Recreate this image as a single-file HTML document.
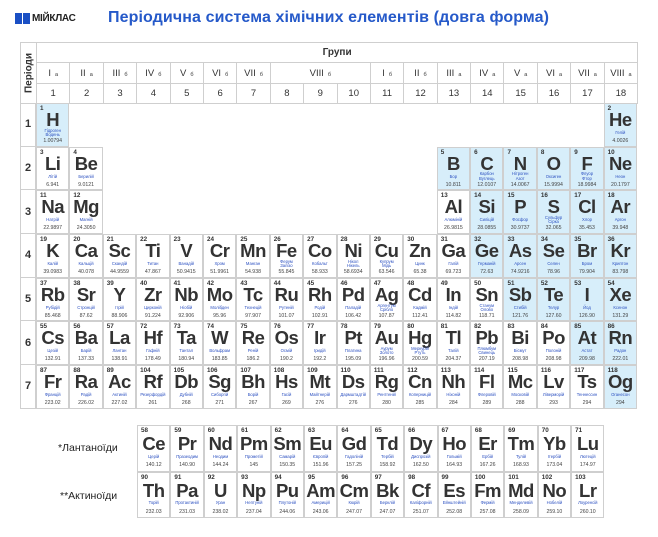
<!DOCTYPE html>
<html><head><meta charset="utf-8"><style>
*{margin:0;padding:0;box-sizing:border-box}
body{width:658px;height:537px;background:#fff;position:relative;overflow:hidden;font-family:"Liberation Sans","DejaVu Sans",sans-serif;color:#333}
.logo{position:absolute;left:15px;top:12px;height:13px;display:flex;align-items:center;gap:2px}
.logo span{font:bold 10px "Liberation Sans",sans-serif;color:#222;letter-spacing:-0.3px}
.title{position:absolute;left:108px;top:9px;font:bold 16px "Liberation Sans",sans-serif;color:#2559c9;white-space:nowrap;letter-spacing:0.1px}
table.h{position:absolute;left:20px;top:42px;border-collapse:collapse;width:617px;table-layout:fixed}
table.h td{border:1.5px solid #cfcfcf;text-align:center;font-size:9.5px;color:#333;padding:0}
table.h sub{font-size:5.5px;vertical-align:baseline;margin-left:4px}
.per{position:absolute;left:20px;top:103px;width:16px}
.per div{height:43.7px;border:1.5px solid #cfcfcf;border-top:none;display:flex;align-items:center;justify-content:center;font:bold 11px "Liberation Sans",sans-serif}
.g{position:absolute;display:grid}
.g1{left:36px;top:103px;grid-template-columns:repeat(18,33.4px);grid-template-rows:repeat(7,43.7px)}
.g2{left:137px;top:425px;grid-template-columns:repeat(14,33.4px);grid-template-rows:repeat(2,46.5px)}
.g>div{border:1px solid #cfcfcf;position:relative;background:#fff}
.g>div.b{background:#d7eefa}
.g i{position:absolute;left:3px;top:1px;font:bold 6.3px "Liberation Sans",sans-serif;font-style:normal;color:#333}
.g b{position:absolute;left:0;right:0;top:6px;text-align:center;font:bold 18.5px/19px "Liberation Sans",sans-serif;color:#333;letter-spacing:-0.5px}
.g u{position:absolute;left:0;right:0;top:25px;height:8px;display:flex;flex-direction:column;align-items:center;justify-content:center;font:4.2px/4.2px "Liberation Sans",sans-serif;color:#2a4fc0;text-decoration:none;white-space:nowrap;overflow:visible}
.g s{position:absolute;left:0;right:0;top:34px;text-align:center;font:5.2px/6px "Liberation Sans",sans-serif;color:#444;text-decoration:none}
.g2 b{top:8px}.g2 u{top:27px}.g2 s{top:36px}
.lab{position:absolute;font:10.5px "Liberation Sans",sans-serif;color:#222}
</style></head><body>
<div class="logo"><svg width="15" height="11" viewBox="0 0 15 11"><rect x="0" y="0" width="7" height="11" fill="#1a4fc4"/><rect x="8" y="0" width="7" height="11" fill="#1a4fc4"/></svg><span>МІЙКЛАС</span></div>
<div class="title">Періодична система хімічних елементів (довга форма)</div>
<table class="h">
<colgroup><col style="width:16px"><col span="18" style="width:33.4px"></colgroup>
<tr style="height:20px"><td rowspan="3" style="position:relative"><div style="position:absolute;left:50%;top:50%;transform:translate(-50%,-50%) rotate(-90deg);font:bold 10px 'Liberation Sans',sans-serif;white-space:nowrap">Періоди</div></td><td colspan="18" style="font-weight:bold;font-size:10px">Групи</td></tr>
<tr style="height:21px"><td>I<sub>а</sub></td><td>II<sub>а</sub></td><td>III<sub>б</sub></td><td>IV<sub>б</sub></td><td>V<sub>б</sub></td><td>VI<sub>б</sub></td><td>VII<sub>б</sub></td><td colspan="3">VIII<sub>б</sub></td><td>I<sub>б</sub></td><td>II<sub>б</sub></td><td>III<sub>а</sub></td><td>IV<sub>а</sub></td><td>V<sub>а</sub></td><td>VI<sub>а</sub></td><td>VII<sub>а</sub></td><td>VIII<sub>а</sub></td></tr>
<tr style="height:20px"><td>1</td><td>2</td><td>3</td><td>4</td><td>5</td><td>6</td><td>7</td><td>8</td><td>9</td><td>10</td><td>11</td><td>12</td><td>13</td><td>14</td><td>15</td><td>16</td><td>17</td><td>18</td></tr>
</table>
<div class="per"><div>1</div><div>2</div><div>3</div><div>4</div><div>5</div><div>6</div><div>7</div></div>
<div class="g g1">
<div class="b" style="grid-area:1/1"><i>1</i><b>H</b><u><span>Гідроген</span><span>Водень</span></u><s>1.00794</s></div>
<div class="b" style="grid-area:1/18"><i>2</i><b>He</b><u>Гелій</u><s>4.0026</s></div>
<div style="grid-area:2/1"><i>3</i><b>Li</b><u>Літій</u><s>6.941</s></div>
<div style="grid-area:2/2"><i>4</i><b>Be</b><u>Берилій</u><s>9.0121</s></div>
<div class="b" style="grid-area:2/13"><i>5</i><b>B</b><u>Бор</u><s>10.811</s></div>
<div class="b" style="grid-area:2/14"><i>6</i><b>C</b><u><span>Карбон</span><span>Вуглець</span></u><s>12.0107</s></div>
<div class="b" style="grid-area:2/15"><i>7</i><b>N</b><u><span>Нітроген</span><span>Азот</span></u><s>14.0067</s></div>
<div class="b" style="grid-area:2/16"><i>8</i><b>O</b><u>Оксиген</u><s>15.9994</s></div>
<div class="b" style="grid-area:2/17"><i>9</i><b>F</b><u><span>Флуор</span><span>Фтор</span></u><s>18.9984</s></div>
<div class="b" style="grid-area:2/18"><i>10</i><b>Ne</b><u>Неон</u><s>20.1797</s></div>
<div style="grid-area:3/1"><i>11</i><b>Na</b><u>Натрій</u><s>22.9897</s></div>
<div style="grid-area:3/2"><i>12</i><b>Mg</b><u>Магній</u><s>24.3050</s></div>
<div style="grid-area:3/13"><i>13</i><b>Al</b><u>Алюміній</u><s>26.9815</s></div>
<div class="b" style="grid-area:3/14"><i>14</i><b>Si</b><u>Силіцій</u><s>28.0855</s></div>
<div class="b" style="grid-area:3/15"><i>15</i><b>P</b><u>Фосфор</u><s>30.9737</s></div>
<div class="b" style="grid-area:3/16"><i>16</i><b>S</b><u><span>Сульфур</span><span>Сірка</span></u><s>32.065</s></div>
<div class="b" style="grid-area:3/17"><i>17</i><b>Cl</b><u>Хлор</u><s>35.453</s></div>
<div class="b" style="grid-area:3/18"><i>18</i><b>Ar</b><u>Аргон</u><s>39.948</s></div>
<div style="grid-area:4/1"><i>19</i><b>K</b><u>Калій</u><s>39.0983</s></div>
<div style="grid-area:4/2"><i>20</i><b>Ca</b><u>Кальцій</u><s>40.078</s></div>
<div style="grid-area:4/3"><i>21</i><b>Sc</b><u>Скандій</u><s>44.9559</s></div>
<div style="grid-area:4/4"><i>22</i><b>Ti</b><u>Титан</u><s>47.867</s></div>
<div style="grid-area:4/5"><i>23</i><b>V</b><u>Ванадій</u><s>50.9415</s></div>
<div style="grid-area:4/6"><i>24</i><b>Cr</b><u>Хром</u><s>51.9961</s></div>
<div style="grid-area:4/7"><i>25</i><b>Mn</b><u>Манган</u><s>54.938</s></div>
<div style="grid-area:4/8"><i>26</i><b>Fe</b><u><span>Ферум</span><span>Залізо</span></u><s>55.845</s></div>
<div style="grid-area:4/9"><i>27</i><b>Co</b><u>Кобальт</u><s>58.933</s></div>
<div style="grid-area:4/10"><i>28</i><b>Ni</b><u><span>Нікол</span><span>Нікель</span></u><s>58.6934</s></div>
<div style="grid-area:4/11"><i>29</i><b>Cu</b><u><span>Купрум</span><span>Мідь</span></u><s>63.546</s></div>
<div style="grid-area:4/12"><i>30</i><b>Zn</b><u>Цинк</u><s>65.38</s></div>
<div style="grid-area:4/13"><i>31</i><b>Ga</b><u>Галій</u><s>69.723</s></div>
<div class="b" style="grid-area:4/14"><i>32</i><b>Ge</b><u>Германій</u><s>72.63</s></div>
<div class="b" style="grid-area:4/15"><i>33</i><b>As</b><u>Арсен</u><s>74.9216</s></div>
<div class="b" style="grid-area:4/16"><i>34</i><b>Se</b><u>Селен</u><s>78.96</s></div>
<div class="b" style="grid-area:4/17"><i>35</i><b>Br</b><u>Бром</u><s>79.904</s></div>
<div class="b" style="grid-area:4/18"><i>36</i><b>Kr</b><u>Криптон</u><s>83.798</s></div>
<div style="grid-area:5/1"><i>37</i><b>Rb</b><u>Рубідій</u><s>85.468</s></div>
<div style="grid-area:5/2"><i>38</i><b>Sr</b><u>Стронцій</u><s>87.62</s></div>
<div style="grid-area:5/3"><i>39</i><b>Y</b><u>Ітрій</u><s>88.906</s></div>
<div style="grid-area:5/4"><i>40</i><b>Zr</b><u>Цирконій</u><s>91.224</s></div>
<div style="grid-area:5/5"><i>41</i><b>Nb</b><u>Ніобій</u><s>92.906</s></div>
<div style="grid-area:5/6"><i>42</i><b>Mo</b><u>Молібден</u><s>95.96</s></div>
<div style="grid-area:5/7"><i>43</i><b>Tc</b><u>Технецій</u><s>97.907</s></div>
<div style="grid-area:5/8"><i>44</i><b>Ru</b><u>Рутеній</u><s>101.07</s></div>
<div style="grid-area:5/9"><i>45</i><b>Rh</b><u>Родій</u><s>102.91</s></div>
<div style="grid-area:5/10"><i>46</i><b>Pd</b><u>Паладій</u><s>106.42</s></div>
<div style="grid-area:5/11"><i>47</i><b>Ag</b><u><span>Аргентум</span><span>Срібло</span></u><s>107.87</s></div>
<div style="grid-area:5/12"><i>48</i><b>Cd</b><u>Кадмій</u><s>112.41</s></div>
<div style="grid-area:5/13"><i>49</i><b>In</b><u>Індій</u><s>114.82</s></div>
<div style="grid-area:5/14"><i>50</i><b>Sn</b><u><span>Станум</span><span>Олово</span></u><s>118.71</s></div>
<div class="b" style="grid-area:5/15"><i>51</i><b>Sb</b><u>Стибій</u><s>121.76</s></div>
<div class="b" style="grid-area:5/16"><i>52</i><b>Te</b><u>Телур</u><s>127.60</s></div>
<div class="b" style="grid-area:5/17"><i>53</i><b>I</b><u>Йод</u><s>126.90</s></div>
<div class="b" style="grid-area:5/18"><i>54</i><b>Xe</b><u>Ксенон</u><s>131.29</s></div>
<div style="grid-area:6/1"><i>55</i><b>Cs</b><u>Цезій</u><s>132.91</s></div>
<div style="grid-area:6/2"><i>56</i><b>Ba</b><u>Барій</u><s>137.33</s></div>
<div style="grid-area:6/3"><i>57</i><b>La</b><u>Лантан</u><s>138.91</s></div>
<div style="grid-area:6/4"><i>72</i><b>Hf</b><u>Гафній</u><s>178.49</s></div>
<div style="grid-area:6/5"><i>73</i><b>Ta</b><u>Тантал</u><s>180.94</s></div>
<div style="grid-area:6/6"><i>74</i><b>W</b><u>Вольфрам</u><s>183.85</s></div>
<div style="grid-area:6/7"><i>75</i><b>Re</b><u>Реній</u><s>186.2</s></div>
<div style="grid-area:6/8"><i>76</i><b>Os</b><u>Осмій</u><s>190.2</s></div>
<div style="grid-area:6/9"><i>77</i><b>Ir</b><u>Іридій</u><s>192.2</s></div>
<div style="grid-area:6/10"><i>78</i><b>Pt</b><u>Платина</u><s>195.09</s></div>
<div style="grid-area:6/11"><i>79</i><b>Au</b><u><span>Аурум</span><span>Золото</span></u><s>196.96</s></div>
<div style="grid-area:6/12"><i>80</i><b>Hg</b><u><span>Меркурій</span><span>Ртуть</span></u><s>200.59</s></div>
<div style="grid-area:6/13"><i>81</i><b>Tl</b><u>Талій</u><s>204.37</s></div>
<div style="grid-area:6/14"><i>82</i><b>Pb</b><u><span>Плюмбум</span><span>Свинець</span></u><s>207.19</s></div>
<div style="grid-area:6/15"><i>83</i><b>Bi</b><u>Бісмут</u><s>208.98</s></div>
<div style="grid-area:6/16"><i>84</i><b>Po</b><u>Полоній</u><s>208.98</s></div>
<div class="b" style="grid-area:6/17"><i>85</i><b>At</b><u>Астат</u><s>209.98</s></div>
<div class="b" style="grid-area:6/18"><i>86</i><b>Rn</b><u>Радон</u><s>222.01</s></div>
<div style="grid-area:7/1"><i>87</i><b>Fr</b><u>Францій</u><s>223.02</s></div>
<div style="grid-area:7/2"><i>88</i><b>Ra</b><u>Радій</u><s>226.02</s></div>
<div style="grid-area:7/3"><i>89</i><b>Ac</b><u>Актиній</u><s>227.02</s></div>
<div style="grid-area:7/4"><i>104</i><b>Rf</b><u>Резерфордій</u><s>261</s></div>
<div style="grid-area:7/5"><i>105</i><b>Db</b><u>Дубній</u><s>268</s></div>
<div style="grid-area:7/6"><i>106</i><b>Sg</b><u>Сиборгій</u><s>271</s></div>
<div style="grid-area:7/7"><i>107</i><b>Bh</b><u>Борій</u><s>267</s></div>
<div style="grid-area:7/8"><i>108</i><b>Hs</b><u>Гасій</u><s>269</s></div>
<div style="grid-area:7/9"><i>109</i><b>Mt</b><u>Майтнерій</u><s>276</s></div>
<div style="grid-area:7/10"><i>110</i><b>Ds</b><u>Дармштадтій</u><s>276</s></div>
<div style="grid-area:7/11"><i>111</i><b>Rg</b><u>Рентгеній</u><s>280</s></div>
<div style="grid-area:7/12"><i>112</i><b>Cn</b><u>Коперницій</u><s>285</s></div>
<div style="grid-area:7/13"><i>113</i><b>Nh</b><u>Ніхоній</u><s>284</s></div>
<div style="grid-area:7/14"><i>114</i><b>Fl</b><u>Флеровій</u><s>289</s></div>
<div style="grid-area:7/15"><i>115</i><b>Mc</b><u>Московій</u><s>288</s></div>
<div style="grid-area:7/16"><i>116</i><b>Lv</b><u>Ліверморій</u><s>293</s></div>
<div style="grid-area:7/17"><i>117</i><b>Ts</b><u>Теннессин</u><s>294</s></div>
<div class="b" style="grid-area:7/18"><i>118</i><b>Og</b><u>Оганесон</u><s>294</s></div>
</div>
<div class="lab" style="left:58px;top:442px">*Лантаноїди</div>
<div class="lab" style="left:60px;top:490px">**Актиноїди</div>
<div class="g g2">
<div><i>58</i><b>Ce</b><u>Церій</u><s>140.12</s></div>
<div><i>59</i><b>Pr</b><u>Празеодим</u><s>140.90</s></div>
<div><i>60</i><b>Nd</b><u>Неодим</u><s>144.24</s></div>
<div><i>61</i><b>Pm</b><u>Прометій</u><s>145</s></div>
<div><i>62</i><b>Sm</b><u>Самарій</u><s>150.35</s></div>
<div><i>63</i><b>Eu</b><u>Європій</u><s>151.96</s></div>
<div><i>64</i><b>Gd</b><u>Гадоліній</u><s>157.25</s></div>
<div><i>65</i><b>Td</b><u>Тербій</u><s>158.92</s></div>
<div><i>66</i><b>Dy</b><u>Диспрозій</u><s>162.50</s></div>
<div><i>67</i><b>Ho</b><u>Гольмій</u><s>164.93</s></div>
<div><i>68</i><b>Er</b><u>Ербій</u><s>167.26</s></div>
<div><i>69</i><b>Tm</b><u>Тулій</u><s>168.93</s></div>
<div><i>70</i><b>Yb</b><u>Ітербій</u><s>173.04</s></div>
<div><i>71</i><b>Lu</b><u>Лютецій</u><s>174.97</s></div>
<div><i>90</i><b>Th</b><u>Торій</u><s>232.03</s></div>
<div><i>91</i><b>Pa</b><u>Протактиній</u><s>231.03</s></div>
<div><i>92</i><b>U</b><u>Уран</u><s>238.02</s></div>
<div><i>93</i><b>Np</b><u>Нептуній</u><s>237.04</s></div>
<div><i>94</i><b>Pu</b><u>Плутоній</u><s>244.06</s></div>
<div><i>95</i><b>Am</b><u>Америцій</u><s>243.06</s></div>
<div><i>96</i><b>Cm</b><u>Кюрій</u><s>247.07</s></div>
<div><i>97</i><b>Bk</b><u>Берклій</u><s>247.07</s></div>
<div><i>98</i><b>Cf</b><u>Каліфорній</u><s>251.07</s></div>
<div><i>99</i><b>Es</b><u>Ейнштейній</u><s>252.08</s></div>
<div><i>100</i><b>Fm</b><u>Фермій</u><s>257.08</s></div>
<div><i>101</i><b>Md</b><u>Менделевій</u><s>258.09</s></div>
<div><i>102</i><b>No</b><u>Нобелій</u><s>259.10</s></div>
<div><i>103</i><b>Lr</b><u>Лоуренсій</u><s>260.10</s></div>
</div>
</body></html>
